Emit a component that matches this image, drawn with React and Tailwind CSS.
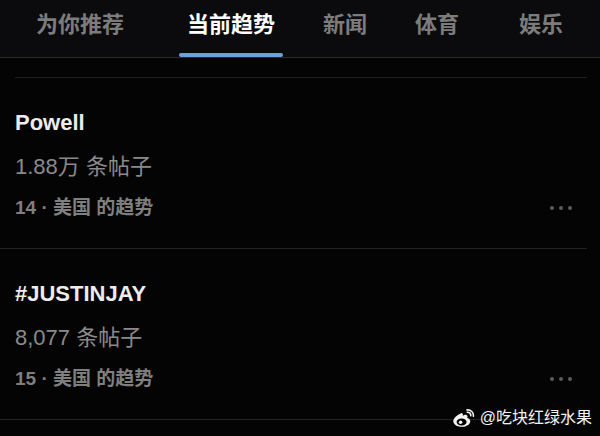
import React from 'react';

const FONT = { fontFamily: '"Liberation Sans", "Noto Sans CJK SC", sans-serif' };

const TABS = [
  { label: '为你推荐', cls: 'ml-[20px] w-[120px]' },
  { label: '当前趋势', cls: 'ml-[39px] w-[104px]', active: true },
  { label: '新闻', cls: 'ml-[22px] w-[80px]' },
  { label: '体育', cls: 'ml-[12px] w-[80px]' },
  { label: '娱乐', cls: 'ml-[24px] w-[80px]' },
];

const TRENDS = [
  { title: 'Powell', posts: '1.88万 条帖子', rank: '14 · 美国 的趋势' },
  { title: '#JUSTINJAY', posts: '8,077 条帖子', rank: '15 · 美国 的趋势' },
];

function WeiboLogo() {
  return (
    <svg width="23" height="19" viewBox="0 0 23 19" fill="none">
      {/* body */}
      <path
        d="M9.2 4.2C5.2 5.6 1 9.3 1.3 12.6c.3 3.3 4.6 5.6 9.1 5.2 4.8-.4 8.2-3 7.9-5.9-.2-1.8-2-2.6-3.2-2.8.9-1.5.6-2.9-.7-3.2-1.2-.3-2.8.4-3.6.9.5-1.6-.6-3.4-1.6-2.6z"
        fill="#f2f2f2"
      />
      <ellipse cx="9.6" cy="13" rx="5" ry="3.5" fill="#000" />
      <circle cx="8.6" cy="13.3" r="1.8" fill="#f2f2f2" />
      {/* arcs */}
      <path d="M15.2 3.2c2.2-.2 3.8 1.4 3.6 3.6" stroke="#f2f2f2" strokeWidth="1.6" strokeLinecap="round" />
      <path d="M15 0.9c3.8-.4 6.8 2.5 6.4 6.3" stroke="#f2f2f2" strokeWidth="1.6" strokeLinecap="round" />
    </svg>
  );
}

function TrendItem({ item }) {
  return (
    <div className="pl-[15px] pr-[15px] pt-[31px] pb-[28px] border-b border-[#222222]">
      <div className="text-[22px] leading-[28px] font-bold text-[#ececec]">{item.title}</div>
      <div className="mt-[16px] text-[22px] leading-[28px] text-[#8a8a8a]">{item.posts}</div>
      <div className="mt-[15px] flex items-center justify-between">
        <span className="text-[19px] leading-[24px] font-bold text-[#7f7f7f]">{item.rank}</span>
        <span className="flex gap-[5px]">
          <span className="w-[4px] h-[4px] rounded-full bg-[#5c5c5c]"></span>
          <span className="w-[4px] h-[4px] rounded-full bg-[#5c5c5c]"></span>
          <span className="w-[4px] h-[4px] rounded-full bg-[#5c5c5c]"></span>
        </span>
      </div>
    </div>
  );
}

export default function App() {
  return (
    <div className="relative w-[600px] h-[436px] bg-[#040404] overflow-hidden" style={FONT}>
      {/* Tab bar */}
      <div className="h-[58px] flex bg-[#0b0b0d] border-b border-[#2a2a2a]">
        {TABS.map((tab) => (
          <div key={tab.label} className={`${tab.cls} flex flex-col items-center`}>
            <span
              className={`pt-[10px] text-[22px] leading-[30px] font-bold ${
                tab.active ? 'text-white' : 'text-[#7c7c7c]'
              }`}
            >
              {tab.label}
            </span>
            {tab.active && <span className="mt-auto w-[104px] h-[4px] rounded-full bg-[#6e9fe0]"></span>}
          </div>
        ))}
      </div>

      <div className="mt-[19px] ml-[15px] mr-[13px] h-px bg-[#1e1e1e]"></div>

      <div className="mr-[13px]">
        {TRENDS.map((item) => (
          <TrendItem key={item.title} item={item} />
        ))}
      </div>

      {/* watermark */}
      <div className="absolute right-[8px] bottom-[7px] flex items-center gap-[5px] text-[16px] leading-[22px] text-[#f2f2f2]">
        <WeiboLogo />
        <span>@吃块红绿水果</span>
      </div>
    </div>
  );
}
